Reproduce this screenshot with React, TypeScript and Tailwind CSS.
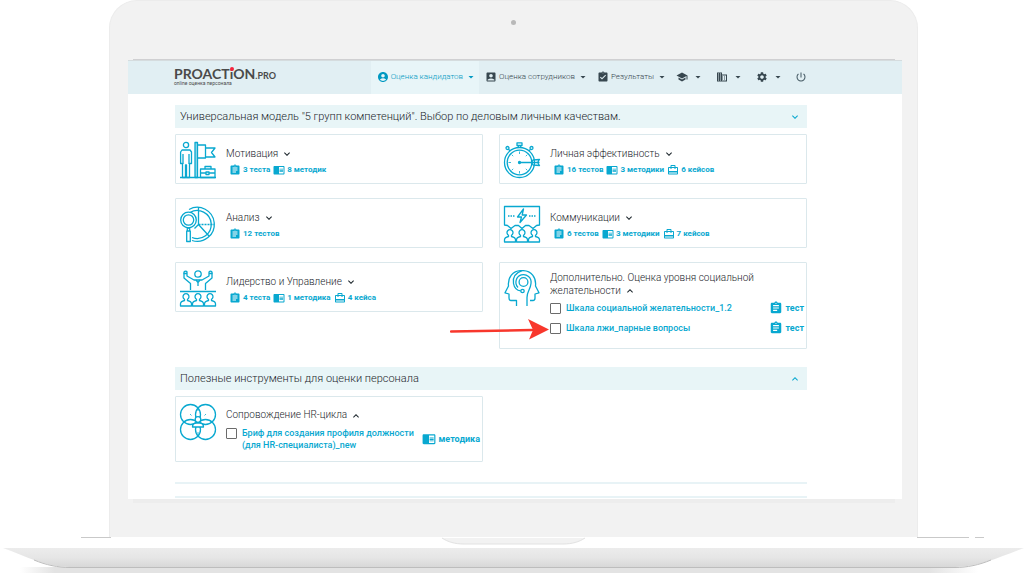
import React from 'react';
import {
  MdAccountBox,
  MdAccountCircle,
  MdArrowDropDown,
  MdAssignment,
  MdAssignmentTurnedIn,
  MdBusiness,
  MdCardTravel,
  MdChromeReaderMode,
  MdExpandLess,
  MdExpandMore,
  MdPowerSettingsNew,
  MdSchool,
  MdSettings,
} from 'react-icons/md';

type BadgeKind = 'test' | 'method' | 'case';

interface Badge {
  kind: BadgeKind;
  text: string;
}

const badgeIcons = {
  test: MdAssignment,
  method: MdChromeReaderMode,
  case: MdCardTravel,
};

/* ---------- category drawings ---------- */

function Drawing({ children }: { children: React.ReactNode }) {
  return (
    <svg
      viewBox="0 0 36 36"
      className="w-9 h-9 shrink-0 text-[#08a8d0] overflow-visible"
      fill="none"
      stroke="currentColor"
      strokeWidth="1.3"
      strokeLinejoin="round"
      aria-hidden="true"
    >
      {children}
    </svg>
  );
}

// three half-length figures along the bottom edge
function Audience() {
  return (
    <>
      {[6, 18, 30].map((x) => (
        <g key={x} transform={`translate(${x} 0)`}>
          <path d="M-1.500 30.500v-1.200a3 3 0 1 1 3 0v1.200c2.400.6 4 1.500 4 3.300V36h-11v-2.200c0-1.800 1.600-2.700 4-3.300z" />
        </g>
      ))}
    </>
  );
}

function MotivationDrawing() {
  return (
    <Drawing>
      <circle cx="6" cy="3" r="2.6" />
      <path d="M2 8h8l1.500 2v11.500H9.500V35.500h-3V23h-1v12.500h-3V21.500H.6V10z" />
      <path d="M3 12v10M9 12v10" />
      <path d="M15 35.500V.5h2.500v35z" fill="currentColor" fillOpacity=".4" />
      <path d="M17.500 3h8v13h-8M25.500 6H35l-3.500 4.500L35 15h-9.500" />
      <rect x="20.500" y="27" width="14.500" height="8.500" />
      <path d="M25 27v-2.500h6V27M20.500 31h5.500M29 31h6M26 30h3v2.500h-3z" />
      <path d="M0 35.500h36" />
    </Drawing>
  );
}

function AnalysisDrawing() {
  return (
    <Drawing>
      <path d="M9 3.500A17 17 0 1 1 12 34.500" />
      <path d="M10 6.500A14 14 0 1 1 12 31.500M18.500 1v17.500L29 30M18.500 18.500l-4 4" />
      <path d="M18.500 18.500h16" strokeDasharray="2 1" />
      <circle cx="8.500" cy="14" r="7.800" />
      <circle cx="8.500" cy="14" r="5.200" />
      <path d="M7.300 22h2.400v3H7.300zM6.700 25h3.600v10.500H6.700z" />
    </Drawing>
  );
}

function LeadershipDrawing() {
  return (
    <Drawing>
      <circle cx="18" cy="4" r="3.200" />
      <path d="M10.500 20v-6.500L4 8V2.200c0-1.400 3-1.400 3 0V6l7 4h8l7-4V2.200c0-1.400 3-1.400 3 0V8l-6.500 5.500V20" />
      <path d="M3.500 3.500h3.500M29 3.500h3.500M16 10l2 2.500 2-2.500M18 13v3" />
      <path d="M0 21.500h36" />
      <Audience />
    </Drawing>
  );
}

function EfficiencyDrawing() {
  return (
    <Drawing>
      <circle cx="15.500" cy="20.500" r="15" />
      <circle cx="15.500" cy="20.500" r="12.300" />
      <path d="M13 .8h5v2.700h-5zM14.300 3.500v2M16.700 3.500v2" />
      <circle cx="3.500" cy="6" r="1.500" />
      <circle cx="27.500" cy="6" r="1.500" />
      <path d="M4.500 7.200l1.500 2M26.500 7.200l-1.500 2" />
      <path
        d="M15.500 9.500v2.500M15.500 29v2.500M4.500 20.500H7M7.700 12.700l1.500 1.500M21.800 14.200l1.500-1.500M7.700 28.300l1.500-1.500M21.800 26.800l1.500 1.500"
        strokeWidth=".8"
      />
      <circle cx="15.500" cy="20.500" r="1" fill="currentColor" />
      <path d="M16.500 20.500h19M29 18l6.500-.5-2 3 2 3-6.500-.5-1.500-2.500z" />
    </Drawing>
  );
}

function CommunicationDrawing() {
  return (
    <Drawing>
      <path d="M.5.500h35v18.500l-3 .5-3.500 3-4-3h-3.500L18 22.500l-3.500-3H11l-4 3-3.500-3-3-.5z" />
      <path d="M19.500 3l-6 8h4l-1.500 5.500 6.500-7.500h-4.300z" />
      <path d="M4 10h7M25 10h7" strokeDasharray="1.500 1" />
      <Audience />
    </Drawing>
  );
}

function MindDrawing() {
  return (
    <Drawing>
      <path d="M12.500 36v-5.500H7c-1.500 0-2-1-2-2.500v-4l-4-1.200L4.500 16C3.500 7 9 1 16.500.6h3C27 1 32.500 7 31.500 16l3.500 6.800-4 1.200v4c0 1.500-.5 2.500-2 2.500h-3" />
      <path d="M18 .6C11 3 8.500 8 9.500 13.500c.8 4.500 3.500 7 7.200 7.300" />
      <circle cx="18.500" cy="21" r="1.700" />
      <circle cx="19.500" cy="12" r="4.400" />
      <path d="M14 17.500A7.600 7.600 0 1 1 27 13.500c-.5 6-4 7.500-4 14V36" />
    </Drawing>
  );
}

function CycleDrawing() {
  return (
    <Drawing>
      <circle cx="10.500" cy="10.500" r="10" />
      <circle cx="25.500" cy="10.500" r="10" />
      <circle cx="10.500" cy="25.500" r="10" />
      <circle cx="25.500" cy="25.500" r="10" />
      <circle cx="18" cy="15.500" r="2.800" fill="white" />
      <path d="M12.500 23c0-3 2-4 4-4h3c2 0 4 1 4 4z" fill="white" />
      <path d="M10 10l1.500 1.500M26 10l-1.500 1.500M18 5v2M18 28v2" strokeWidth=".8" />
    </Drawing>
  );
}

/* ---------- header ---------- */

interface NavItemProps {
  icon: React.ReactNode;
  label?: string;
  title?: string;
  active?: boolean;
}

function NavItem({ icon, label, title, active }: NavItemProps) {
  return (
    <button
      type="button"
      aria-label={title}
      className={`flex items-center h-full pl-1.5 pb-0.5 text-[8px] font-light ${label ? 'gap-0.5 pr-0.5' : 'gap-1 pr-1.5'} ${
        active ? 'bg-[#e8f5f8] text-[#0099c2]' : 'text-[#37474f]'
      }`}
    >
      {icon}
      {label && <span>{label}</span>}
      <MdArrowDropDown className="w-3 h-3" />
    </button>
  );
}

function Header() {
  return (
    <header className="flex items-center justify-between h-[34px] pl-[46px] pr-[90px] bg-[#e1eff3] border-t border-[#d5dcde]">
      <a href="#" className="block pb-0.5 text-[#4a4a4a]">
        <span className="flex items-baseline h-[13px] leading-[13px] font-['Lato'] font-bold text-[14px]">
          PROACT
          <span className="relative">
            i
            <span className="absolute left-0 top-0 w-1 h-1 rounded-full bg-[#f5233c]" />
          </span>
          ON
          <span className="text-[9px]">.PRO</span>
        </span>
        <span className="block text-[5px] leading-[7px]">online оценка персонала</span>
      </a>
      <nav className="flex items-center h-full">
        <NavItem icon={<MdAccountCircle className="w-3 h-3" />} label="Оценка кандидатов" active />
        <NavItem icon={<MdAccountBox className="w-3 h-3" />} label="Оценка сотрудников" />
        <NavItem icon={<MdAssignmentTurnedIn className="w-3 h-3" />} label="Результаты" />
        <NavItem icon={<MdSchool className="w-3 h-3" />} title="Обучение" />
        <NavItem icon={<MdBusiness className="w-3 h-3" />} title="Компания" />
        <NavItem icon={<MdSettings className="w-3 h-3" />} title="Настройки" />
        <button type="button" aria-label="Выход" className="px-[5px] pb-0.5 text-[#455a64]">
          <MdPowerSettingsNew className="w-3 h-3" />
        </button>
      </nav>
    </header>
  );
}

/* ---------- catalogue ---------- */

function SectionBar({ title, open }: { title: string; open?: boolean }) {
  const Chevron = open ? MdExpandLess : MdExpandMore;
  return (
    <button
      type="button"
      className="flex items-center justify-between w-full h-[23px] pt-px pl-[5px] pr-1.5 bg-[#e8f5f7] text-left text-[11px] font-light text-[#1c262c]"
    >
      {title}
      <Chevron className="w-3 h-3 text-[#08a8d0]" />
    </button>
  );
}

interface CardProps {
  drawing: React.ReactNode;
  title: string;
  badges?: Badge[];
  className?: string;
  children?: React.ReactNode;
}

function Card({ drawing, title, badges, className = 'pt-3', children }: CardProps) {
  const Chevron = children ? MdExpandLess : MdExpandMore;
  return (
    <article className="flex items-start min-h-[50px] border border-[#dbe8ec] rounded-[1px] pl-1">
      <div className="pt-[7px]">{drawing}</div>
      <div className={`flex-1 pl-2.5 pr-0.5 ${className}`}>
        <h3 className="text-[10px] leading-[13px] font-light text-[#1c262c]">
          <button type="button" className="block max-w-[230px] text-left">
            {title}
            <Chevron className="inline w-3 h-3 ml-[3px]" />
          </button>
        </h3>
        {badges && (
          <ul className="flex gap-[3px] pl-[3px] mt-1 text-[8px] leading-3 font-bold text-[#08a8d0]">
            {badges.map(({ kind, text }) => {
              const Icon = badgeIcons[kind];
              return (
                <li key={text} className="flex items-center gap-0.5">
                  <Icon className="w-3 h-3" />
                  {text}
                </li>
              );
            })}
          </ul>
        )}
        {children && <div className="mt-px">{children}</div>}
      </div>
    </article>
  );
}

interface OptionProps {
  id: string;
  label: string;
  kind: BadgeKind;
  kindLabel: string;
  pointed?: boolean;
}

function Option({ id, label, kind, kindLabel, pointed }: OptionProps) {
  const Icon = badgeIcons[kind];
  return (
    <div className="flex items-center text-[9px] leading-3 text-[#08a8d0]">
      <span className="relative flex self-start pt-[5px]">
        <input
          id={id}
          type="checkbox"
          className="appearance-none w-[11px] h-[11px] border border-[#6b6b6b] rounded-[1px] bg-white"
        />
        {pointed && (
          <svg viewBox="0 0 100 22" className="absolute right-full top-0 w-[100px] h-[22px] text-[#f8372c]" aria-hidden="true">
            <path d="M1 13.500 82 12" stroke="currentColor" strokeWidth="2.500" strokeLinecap="round" />
            <path d="M78 1 99 11.500 79 21.500 83 12z" fill="currentColor" />
          </svg>
        )}
      </span>
      <label htmlFor={id} className="max-w-[185px] py-1 pl-[5px] font-medium">
        {label}
      </label>
      <span className="flex items-center gap-[3px] ml-auto font-bold">
        <Icon className="w-3.5 h-3.5" />
        {kindLabel}
      </span>
    </div>
  );
}

function Catalogue() {
  return (
    <main className="pl-[47px] pr-[95px] pt-[11px] h-[405px] overflow-hidden bg-white">
      <SectionBar title={'Универсальная модель "5 групп компетенций". Выбор по деловым личным качествам.'} />
      <div className="grid grid-cols-2 items-start gap-x-4 gap-y-3.5 mt-1.5">
        <Card
          drawing={<MotivationDrawing />}
          title="Мотивация"
          badges={[{ kind: 'test', text: '3 теста' }, { kind: 'method', text: '8 методик' }]}
        />
        <Card
          drawing={<EfficiencyDrawing />}
          title="Личная эффективность"
          badges={[{ kind: 'test', text: '16 тестов' }, { kind: 'method', text: '3 методики' }, { kind: 'case', text: '6 кейсов' }]}
        />
        <Card drawing={<AnalysisDrawing />} title="Анализ" badges={[{ kind: 'test', text: '12 тестов' }]} />
        <Card
          drawing={<CommunicationDrawing />}
          title="Коммуникации"
          badges={[{ kind: 'test', text: '6 тестов' }, { kind: 'method', text: '3 методики' }, { kind: 'case', text: '7 кейсов' }]}
        />
        <Card
          drawing={<LeadershipDrawing />}
          title="Лидерство и Управление"
          badges={[{ kind: 'test', text: '4 теста' }, { kind: 'method', text: '1 методика' }, { kind: 'case', text: '4 кейса' }]}
        />
        <Card drawing={<MindDrawing />} title="Дополнительно. Оценка уровня социальной желательности" className="pt-2 pb-2.5">
          <Option id="social" label="Шкала социальной желательности_1.2" kind="test" kindLabel="тест" />
          <Option id="lie" label="Шкала лжи_парные вопросы" kind="test" kindLabel="тест" pointed />
        </Card>
      </div>
      <div className="mt-[18px]">
        <SectionBar title="Полезные инструменты для оценки персонала" open />
      </div>
      <div className="grid grid-cols-2 gap-x-4 mt-1.5">
        <Card drawing={<CycleDrawing />} title="Сопровождение HR-цикла" className="pt-[11px] pb-1.5">
          <Option
            id="brief"
            label="Бриф для создания профиля должности (для HR-специалиста)_new"
            kind="method"
            kindLabel="методика"
          />
        </Card>
      </div>
      <div className="h-0.5 mt-5 bg-[#e8f3f6]" />
      <div className="h-0.5 mt-3 bg-[#e8f3f6]" />
    </main>
  );
}

/* ---------- laptop ---------- */

function LaptopBase() {
  return (
    <svg viewBox="0 0 1036 36" preserveAspectRatio="none" className="block w-full h-9" aria-hidden="true">
      <defs>
        <linearGradient id="base" x1="0" y1="0" x2="0" y2="1">
          <stop offset="0" stopColor="#ececec" />
          <stop offset=".5" stopColor="#e6e6e6" />
          <stop offset="1" stopColor="#d8d8d8" />
        </linearGradient>
        <linearGradient id="floor" x1="0" y1="0" x2="1" y2="0">
          <stop offset="0" stopColor="#fff" />
          <stop offset=".035" stopColor="#e3e3e3" />
          <stop offset=".92" stopColor="#e3e3e3" />
          <stop offset=".97" stopColor="#fff" />
        </linearGradient>
      </defs>
      <path d="M81 .5h30M917 .5h52M975 .5h9" stroke="#c9c9c9" />
      <path d="M442 1c6 4 13 6 22 6h99c9 0 16-2 22-6z" fill="#f2f2f2" />
      <path d="M442 1c6 4 13 6 22 6h99c9 0 16-2 22-6" fill="none" stroke="#e2e2e2" />
      <path d="M20 30h988v6H20z" fill="url(#floor)" />
      <path d="M3 11h1021c-22 8-45 19-69 19H70C45 30 25 19 3 11z" fill="url(#base)" />
      <path d="M34 23c12 5 24 7.500 36 7.500h885c12 0 24-2.500 36-7.500" fill="none" stroke="#bdbdbd" />
    </svg>
  );
}

export default function App() {
  return (
    <div className="min-h-screen overflow-hidden bg-white font-['Roboto',sans-serif]">
      <div className="pl-[109px] pr-[118px]">
        <div className="pl-[18px] pr-[15px] pb-[34px] bg-[#f2f2f2] border-x border-t border-[#ececec] rounded-t-[28px]">
          <div className="flex items-center justify-center h-[43px] pr-[3px]">
            <span className="w-[5px] h-[5px] rounded-full bg-[#b9b9b9]" />
          </div>
          <div className="h-4 ml-[5px] mr-[7px] border-b border-[#d0d0d2]" />
          <Header />
          <Catalogue />
          <div className="h-1 ml-[5px] mr-[7px] bg-[#ededed]" />
        </div>
      </div>
      <LaptopBase />
    </div>
  );
}
